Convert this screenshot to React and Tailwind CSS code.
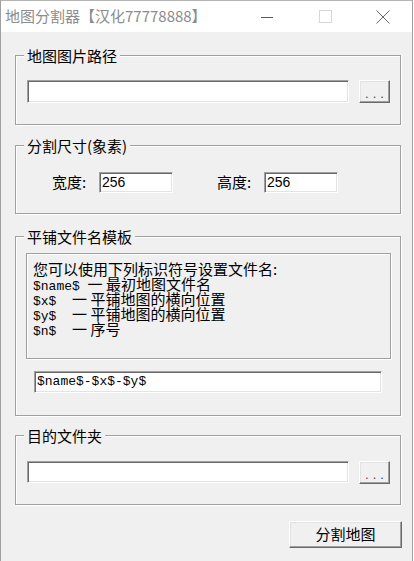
import React from "react"

function Edit({ className, children }) {
  return (
    <div
      className={`bg-white border border-t-[#a0a0a0] border-l-[#a0a0a0] border-r-white border-b-white shadow-[inset_1px_1px_0_#696969,inset_-1px_-1px_0_#e3e3e3] flex items-center pl-[2px] ${className}`}
    >
      {children}
    </div>
  )
}

function Btn({ className, children }) {
  return (
    <div
      className={`bg-[#f0f0f0] border border-t-white border-l-white border-r-[#696969] border-b-[#696969] shadow-[inset_-1px_-1px_0_#a0a0a0,inset_1px_1px_0_#e3e3e3] flex items-center justify-center ${className}`}
    >
      {children}
    </div>
  )
}

function Group({ label, className, children }) {
  return (
    <fieldset
      className={`w-[386px] border border-[#a0a0a0] shadow-[inset_1px_1px_0_#fff,1px_1px_0_#fff] ${className}`}
    >
      <legend className="ml-[8px] px-[3px] bg-[#f0f0f0] text-[15px] leading-[19px]">{label}</legend>
      {children}
    </fieldset>
  )
}

// one line of the hint box: fixed 15px row so mixed fonts don't grow it
function Line({ tag, children }) {
  return (
    <div className="h-[15px] flex items-baseline whitespace-pre">
      {tag && <span className="font-['Liberation_Mono',monospace] text-[13px] leading-[15px]">{tag}</span>}
      <span className="leading-[15px]">{children}</span>
    </div>
  )
}

export default function App() {
  return (
    <div className="w-[413px] h-[561px] overflow-hidden flex flex-col bg-[#f0f0f0] border-x border-[#a0a0a0] text-black font-['Noto_Sans_CJK_SC',sans-serif]">
      {/* Title bar */}
      <div className="h-[32px] shrink-0 bg-white border-t border-[#b4b4b4] flex items-center">
        <span className="pl-[4px] text-[15px] text-[#8c8c8c]">地图分割器【汉化77778888】</span>
        <div className="ml-auto flex h-full">
          <div className="w-[58px] h-full flex items-center justify-center">
            <svg width="12" height="12" viewBox="0 0 12 12">
              <path d="M0 6.5h12" stroke="#5a5a5a" strokeWidth="1" />
            </svg>
          </div>
          <div className="w-[58px] h-full flex items-center justify-center">
            <svg width="13" height="13" viewBox="0 0 13 13">
              <rect x="0.5" y="0.5" width="12" height="12" fill="none" stroke="#d6d6d6" strokeWidth="1" />
            </svg>
          </div>
          <div className="w-[58px] h-full flex items-center justify-center">
            <svg width="14" height="14" viewBox="0 0 14 14">
              <path d="M0.5 0.5l13 13M13.5 0.5l-13 13" stroke="#6a6a6a" strokeWidth="1" />
            </svg>
          </div>
        </div>
      </div>

      {/* Body */}
      <div className="flex-1 flex flex-col pl-[14px]">
        <Group label="地图图片路径" className="mt-[14px] h-[79px]">
          <div className="mt-[15px] pl-[11px] flex gap-[10px]">
            <Edit className="w-[322px] h-[23px]" />
            <Btn className="w-[31px] h-[23px]">
              <span className="font-['Liberation_Sans',sans-serif] text-[13px] tracking-[4px] pl-[4px] pt-[4px] text-[#444]">...</span>
            </Btn>
          </div>
        </Group>

        <Group label="分割尺寸(象素)" className="mt-[11px] h-[78px]">
          <div className="mt-[16px] pl-[36px] flex items-center text-[15px]">
            <span className="w-[47px]">宽度:</span>
            <Edit className="w-[74px] h-[21px] font-['Liberation_Sans',sans-serif] text-[14px]">256</Edit>
            <span className="ml-[44px] w-[47px]">高度:</span>
            <Edit className="w-[74px] h-[21px] font-['Liberation_Sans',sans-serif] text-[14px]">256</Edit>
          </div>
        </Group>

        <Group label="平铺文件名模板" className="mt-[13px] h-[189px]">
          <div className="mt-[7px] ml-[10px] w-[365px] h-[106px] border border-[#a0a0a0] shadow-[inset_1px_1px_0_#fff,1px_1px_0_#fff] pt-[7px] pl-[6px] text-[15px]">
            <Line>您可以使用下列标识符号设置文件名:</Line>
            <Line tag="$name$ ">一 最初地图文件名</Line>
            <Line tag="$x$  ">一 平铺地图的横向位置</Line>
            <Line tag="$y$  ">一 平铺地图的横向位置</Line>
            <Line tag="$n$  ">一 序号</Line>
          </div>
          <Edit className="mt-[12px] ml-[18px] w-[348px] h-[22px] font-['Liberation_Mono',monospace] text-[13px]">
            $name$-$x$-$y$
          </Edit>
        </Group>

        <Group label="目的文件夹" className="mt-[10px] h-[79px]">
          <div className="mt-[16px] pl-[11px] flex gap-[10px]">
            <Edit className="w-[322px] h-[22px]" />
            <Btn className="w-[31px] h-[23px]">
              <span className="font-['Liberation_Sans',sans-serif] text-[13px] tracking-[4px] pl-[4px] pt-[4px] text-[#444]">...</span>
            </Btn>
          </div>
        </Group>

        <Btn className="mt-[16px] ml-[274px] w-[113px] h-[27px] text-[15px]">分割地图</Btn>
      </div>
    </div>
  )
}
